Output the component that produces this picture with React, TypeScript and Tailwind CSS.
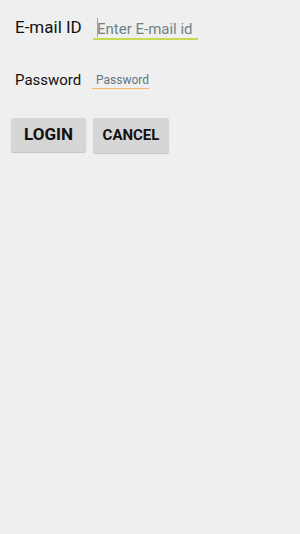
import React from 'react';

export default function App() {
  return (
    <div className="w-[300px] h-[534px] bg-[#efefef] font-['Roboto',sans-serif] text-[#111]">
      <div className="flex items-center pt-[15px] pl-[15px] h-[40px]">
        <span className="text-[17px] w-[78px] leading-none">E-mail ID</span>
        <div className="relative w-[105px] h-[24px] border-b-2 border-[#c8da4e] flex items-end pb-[1px]">
          <span className="absolute left-[4px] top-[2px] w-[1px] h-[19px] bg-[#9fb43a]" />
          <span className="pl-[4px] text-[15px] text-[#6f8284] leading-none">Enter E-mail id</span>
        </div>
      </div>
      <div className="flex items-center mt-[26px] pl-[15px] h-[28px]">
        <span className="text-[15px] w-[77px] leading-none">Password</span>
        <div className="w-[57px] h-[18px] border-b-[1.5px] border-[#f1b868] flex items-center">
          <span className="pl-[4px] text-[12px] text-[#5f7682] leading-none">Password</span>
        </div>
      </div>
      <div className="flex gap-[7px] pl-[11px] mt-[24px]">
        <button className="w-[75px] h-[34px] bg-[#d6d6d6] rounded-[2px] shadow-[0_1px_1px_rgba(0,0,0,0.18)] text-[17px] font-bold text-[#111]">
          LOGIN
        </button>
        <button className="w-[76px] h-[35px] bg-[#d6d6d6] rounded-[2px] shadow-[0_1px_1px_rgba(0,0,0,0.18)] text-[15px] font-bold text-[#111]">
          CANCEL
        </button>
      </div>
    </div>
  );
}
